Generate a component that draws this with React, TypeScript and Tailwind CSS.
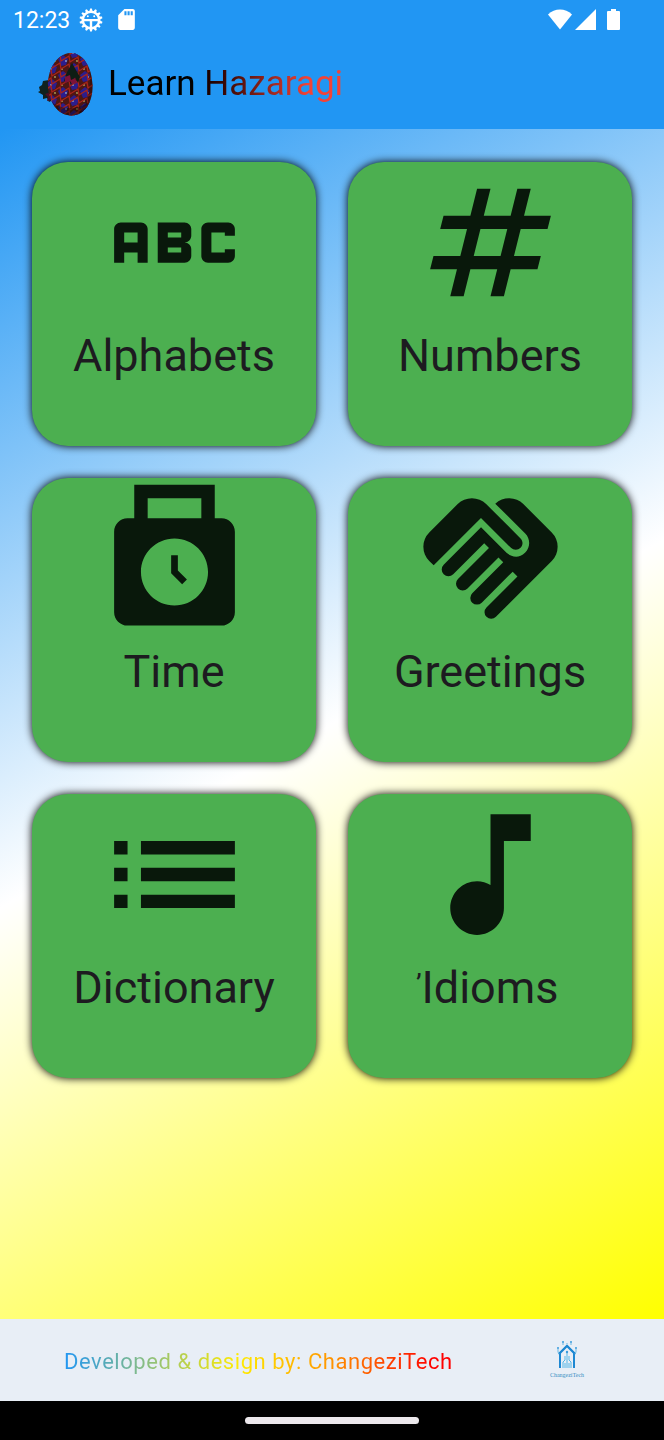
import type { IconType } from 'react-icons';
import {
  MdAbc,
  MdHandshake,
  MdList,
  MdMusicNote,
  MdNumbers,
  MdPunchClock,
  MdSdCard,
} from 'react-icons/md';

interface Lesson {
  id: string;
  label: string;
  icon: IconType;
  quoted?: boolean;
}

const lessons: Lesson[] = [
  { id: 'alphabets', label: 'Alphabets', icon: MdAbc },
  { id: 'numbers', label: 'Numbers', icon: MdNumbers },
  { id: 'time', label: 'Time', icon: MdPunchClock },
  { id: 'greetings', label: 'Greetings', icon: MdHandshake },
  { id: 'dictionary', label: 'Dictionary', icon: MdList },
  { id: 'idioms', label: 'Idioms', icon: MdMusicNote, quoted: true },
];

const teeth = [...Array(14)].map((_, i) => (i * 360) / 14);

const GearIcon = () => (
  <svg viewBox="0 0 24 24" className="h-6 w-6" aria-hidden="true">
    {teeth.map((angle) => (
      <path key={angle} d="M10.300 4 11.100.5h1.800L13.700 4z" fill="#fff" transform={`rotate(${angle} 12 12)`} />
    ))}
    <circle cx="12" cy="12" r="8.200" fill="none" stroke="#fff" strokeWidth="2.400" />
    <path d="M4 11h16v2.300H4zM10.800 12h2.400v8h-2.400z" fill="#fff" />
    <circle cx="8.800" cy="8.200" r="1" fill="#fff" />
    <circle cx="15.200" cy="8.200" r="1" fill="#fff" />
  </svg>
);

const WifiIcon = () => (
  <svg viewBox="0 0 24 21" className="h-[21px] w-6" aria-hidden="true">
    <path d="M12 20.500 0 5.400C3.400 2.200 7.600.5 12 .5s8.600 1.700 12 4.900z" fill="#fff" />
  </svg>
);

const SignalIcon = () => (
  <svg viewBox="0 0 21 21" className="h-[21px] w-[21px]" aria-hidden="true">
    <path d="M0 21 21 0v21z" fill="#fff" />
  </svg>
);

const BatteryIcon = () => (
  <svg viewBox="0 0 13 21" className="h-[21px] w-[13px]" aria-hidden="true">
    <path d="M4 0h5v2h3a1 1 0 0 1 1 1v17a1 1 0 0 1-1 1H1a1 1 0 0 1-1-1V3a1 1 0 0 1 1-1h3z" fill="#fff" />
  </svg>
);

const zigzag = (y: number) =>
  `M6 ${y + 1} 13 ${y - 4} 14 ${y + 2} 22 ${y - 3} 23 ${y + 3} 31 ${y - 2} 32 ${y + 4} 40 ${y - 1} 41 ${y + 5} 49 ${y} 50 ${y + 6} 58 ${y + 1}`;

const beadRows = [-2, 6, 14, 22, 30, 38, 46, 54, 61];

// Embroidered cap with its tassel
const CapLogo = () => (
  <svg viewBox="0 0 56 64" className="h-16 w-14" aria-hidden="true">
    <defs>
      <clipPath id="cap">
        <path d="M32 1C44 0 54 14 54.500 33 55 50 47 63 34 63.500 19 64 11 48 10 36 9 17 19 2 32 1z" />
      </clipPath>
    </defs>
    <path d="M11 28 5 29 4 33 1 35 2 39 0 40 5 43 5 47 9 46 11 50 15 48 15 30z" fill="#10221f" />
    <path d="m7 42 3 3-1 4 5-1-1-8z" fill="#4a0f25" />
    <g clipPath="url(#cap)">
      <rect width="56" height="64" fill="#4e1713" />
      {beadRows.map((y, row) => (
        <g key={y}>
          {[13, 24, 35, 46].map((x, i) => (
            <g key={x}>
              {(row + i) % 2 === 0 && <path d={`m${x - 4} ${y + 1} 5-4 5 4-2 6-5 1z`} fill="#2c1d8c" />}
              <circle
                cx={x + (row % 2) * 4}
                cy={y + 3}
                r="0.900"
                fill={(row + i) % 2 ? '#b0a35a' : '#8fa4c8'}
              />
            </g>
          ))}
          <path d={zigzag(y)} fill="none" stroke="#a8241a" strokeWidth="1.300" />
        </g>
      ))}
      <path d="M34 11 28 22 26 29 31 28 33 33 37 25 40 31 42 25 38 18z" fill="#0e1d14" />
      <path d="m27 25 5-2 1 5 4-2 2 5-5 1-2-3-5 2z" fill="#7d1238" />
      <path d="M47 0c7 14 9 42-8 64h20V0z" fill="#000" opacity="0.250" />
      <path d="M10 46c8 12 30 14 44 2v18H10z" fill="#120505" opacity="0.450" />
    </g>
  </svg>
);

const BrandLogo = () => (
  <div className="flex w-12 flex-col items-center pt-px">
    <svg viewBox="0 0 22 29" className="h-[29px] w-[22px]" aria-hidden="true">
      <g fill="none" stroke="#1e88d2">
        <path d="M4 28V13l7-7 7 7v15" strokeWidth="2" />
        <path d="m2.500 14 8.500-8.500L19.500 14" strokeWidth="1.500" />
        <path d="M7 28v-6l2-2v-4M15 28v-6l-2-2v-4M11 28V12" stroke="#54b6e6" />
        <path d="M9 28v-5M13 28v-5" stroke="#54b6e6" />
        <path d="M7 5V3M11 4V3M15 5V3M3 14l-1-2V9M19 14l1-2V9" stroke="#6ab8e4" />
      </g>
      <g fill="#3a9bdc">
        <circle cx="7" cy="2" r="1" />
        <circle cx="15" cy="2" r="1" />
        <circle cx="2" cy="8" r="1" />
        <circle cx="20" cy="8" r="1" />
        <circle cx="11" cy="12" r="1.200" />
      </g>
    </svg>
    <span className="font-['Liberation_Serif',serif] text-[6px] leading-3 text-[#3a8fc4]">ChangeziTech</span>
  </div>
);

const StatusBar = () => (
  <div className="flex h-[39px] items-center pl-[13px] pr-11 text-white">
    <span className="pt-0.5 text-[23px] leading-6">12:23</span>
    <div className="ml-[9px] flex items-center gap-[11px]">
      <GearIcon />
      <MdSdCard className="h-[25px] w-[25px]" />
    </div>
    <div className="ml-auto flex items-center">
      <WifiIcon />
      <div className="ml-[3px] flex gap-[11px]">
        <SignalIcon />
        <BatteryIcon />
      </div>
    </div>
  </div>
);

const LessonCard = ({ lesson }: { lesson: Lesson }) => {
  const Icon = lesson.icon;

  return (
    <button
      type="button"
      className="flex aspect-square flex-col items-center rounded-[36px] bg-[#4caf50] shadow-[0_0_8px_#000]"
    >
      <Icon className="h-[161px] w-[161px] text-[#09180b]" />
      <span className="flex items-start text-[45px] leading-[66px] text-[#1d1b20]">
        {lesson.quoted && <span className="flex w-0 justify-end text-[28px] leading-[60px]">’</span>}
        {lesson.label}
      </span>
    </button>
  );
};

const App = () => {
  return (
    <div className="flex min-h-screen flex-col font-[Roboto,sans-serif]">
      <header className="bg-[#2196f3]">
        <StatusBar />
        <div className="flex h-[90px] items-center gap-[14px] pl-[38px]">
          <CapLogo />
          <h1 className="bg-linear-to-r from-black from-30% to-[#f44336] to-85% bg-clip-text text-[35px] leading-[48px] text-transparent">
            Learn Hazaragi
          </h1>
        </div>
      </header>

      <main className="flex-1 bg-[linear-gradient(151deg,#2196f3,#fff,#ff0)] px-8 pb-8 pt-[33px]">
        <div className="grid grid-cols-2 gap-8">
          {lessons.map((lesson) => (
            <LessonCard key={lesson.id} lesson={lesson} />
          ))}
        </div>
      </main>

      <footer>
        <div className="flex h-[82px] items-center justify-between bg-[#e8eef6] pl-16 pr-[73px]">
          <p className="bg-[linear-gradient(to_right,#2196f3,#ffeb00_45%,#ff9800_68%,#f00_95%)] bg-clip-text pt-1 text-[22px] leading-8 tracking-wide text-transparent">
            Developed &amp; design by: ChangeziTech
          </p>
          <BrandLogo />
        </div>
        <div className="flex h-[39px] items-center justify-center bg-black">
          <div className="h-[7px] w-[174px] rounded-full bg-[#ece8ec]" />
        </div>
      </footer>
    </div>
  );
};

export default App;
